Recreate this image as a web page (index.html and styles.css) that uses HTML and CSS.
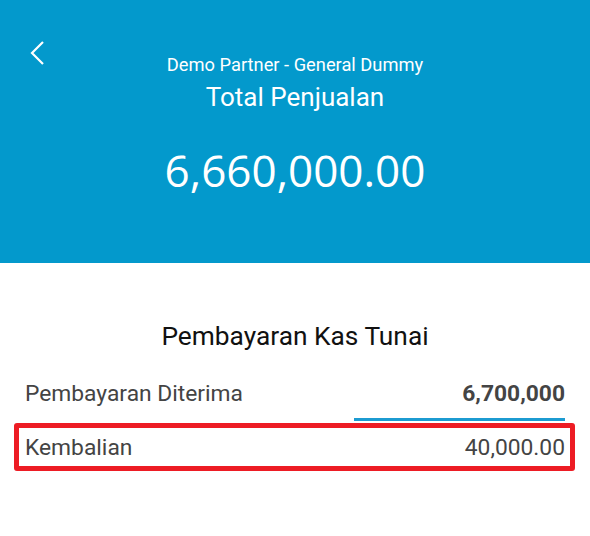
FILE: index.html
```html
<!DOCTYPE html>
<html lang="en">
  <head>
    <meta charset="UTF-8" />
    <meta name="viewport" content="width=device-width, initial-scale=1.0" />
    <title>Pembayaran Kas Tunai</title>
    <link rel="stylesheet" href="styles.css">
  </head>
  <body>
    <header class="header">
      <a href="#" class="back">
        <svg width="16" height="24" viewBox="0 0 16 24">
          <path d="M14 1 L3 12 L14 23" fill="none" stroke="#fff" stroke-width="2.2" />
        </svg>
      </a>
      <p class="partner">Demo Partner - General Dummy</p>
      <h1 class="title">Total Penjualan</h1>
      <p class="total">6,660,000.00</p>
    </header>
    <main class="payment">
      <h2>Pembayaran Kas Tunai</h2>
      <div class="row received">
        <span class="label">Pembayaran Diterima</span>
        <span class="value">6,700,000</span>
      </div>
      <div class="row change">
        <span class="label">Kembalian</span>
        <span class="value">40,000.00</span>
      </div>
    </main>
  </body>
</html>
```

FILE: styles.css
```css
html {
  font-family: Roboto, "Noto Sans", sans-serif;
}
body {
  margin: 0;
  background: #fff;
}
.header {
  position: relative;
  height: 263px;
  box-sizing: border-box;
  padding-top: 53px;
  background-color: #0399cc;
  color: #fff;
  text-align: center;
}
.back {
  position: absolute;
  top: 41px;
  left: 29px;
  line-height: 0;
}
.partner {
  margin: 0;
  font-size: 18.3px;
  line-height: 24px;
}
.title {
  margin: 4px 0 0;
  font-size: 26px;
  font-weight: normal;
  line-height: 32px;
}
.total {
  margin: 29px 0 0;
  font-family: "Open Sans", sans-serif;
  font-size: 44px;
  line-height: 56px;
}

/************************
  PAYMENT
************************/
.payment {
  padding: 0 25px;
}
.payment h2 {
  margin: 0;
  padding-top: 57px;
  font-size: 26.3px;
  font-weight: normal;
  line-height: 32px;
  color: #111;
  text-align: center;
}
.row {
  display: flex;
  justify-content: space-between;
  align-items: center;
  font-size: 22.8px;
  color: #444;
}
.received {
  position: relative;
  margin-top: 13px;
  height: 56px;
}
.received::after {
  content: "";
  position: absolute;
  right: 0;
  bottom: 0;
  width: 211px;
  height: 3px;
  background-color: #1c9bd1;
}
.received .value {
  font-weight: bold;
}
.change {
  margin: 2px -10px 0 -11px;
  padding: 0 5px 0 6px;
  height: 38px;
  border: 5px solid #ed1c24;
  border-radius: 3px;
}
```
